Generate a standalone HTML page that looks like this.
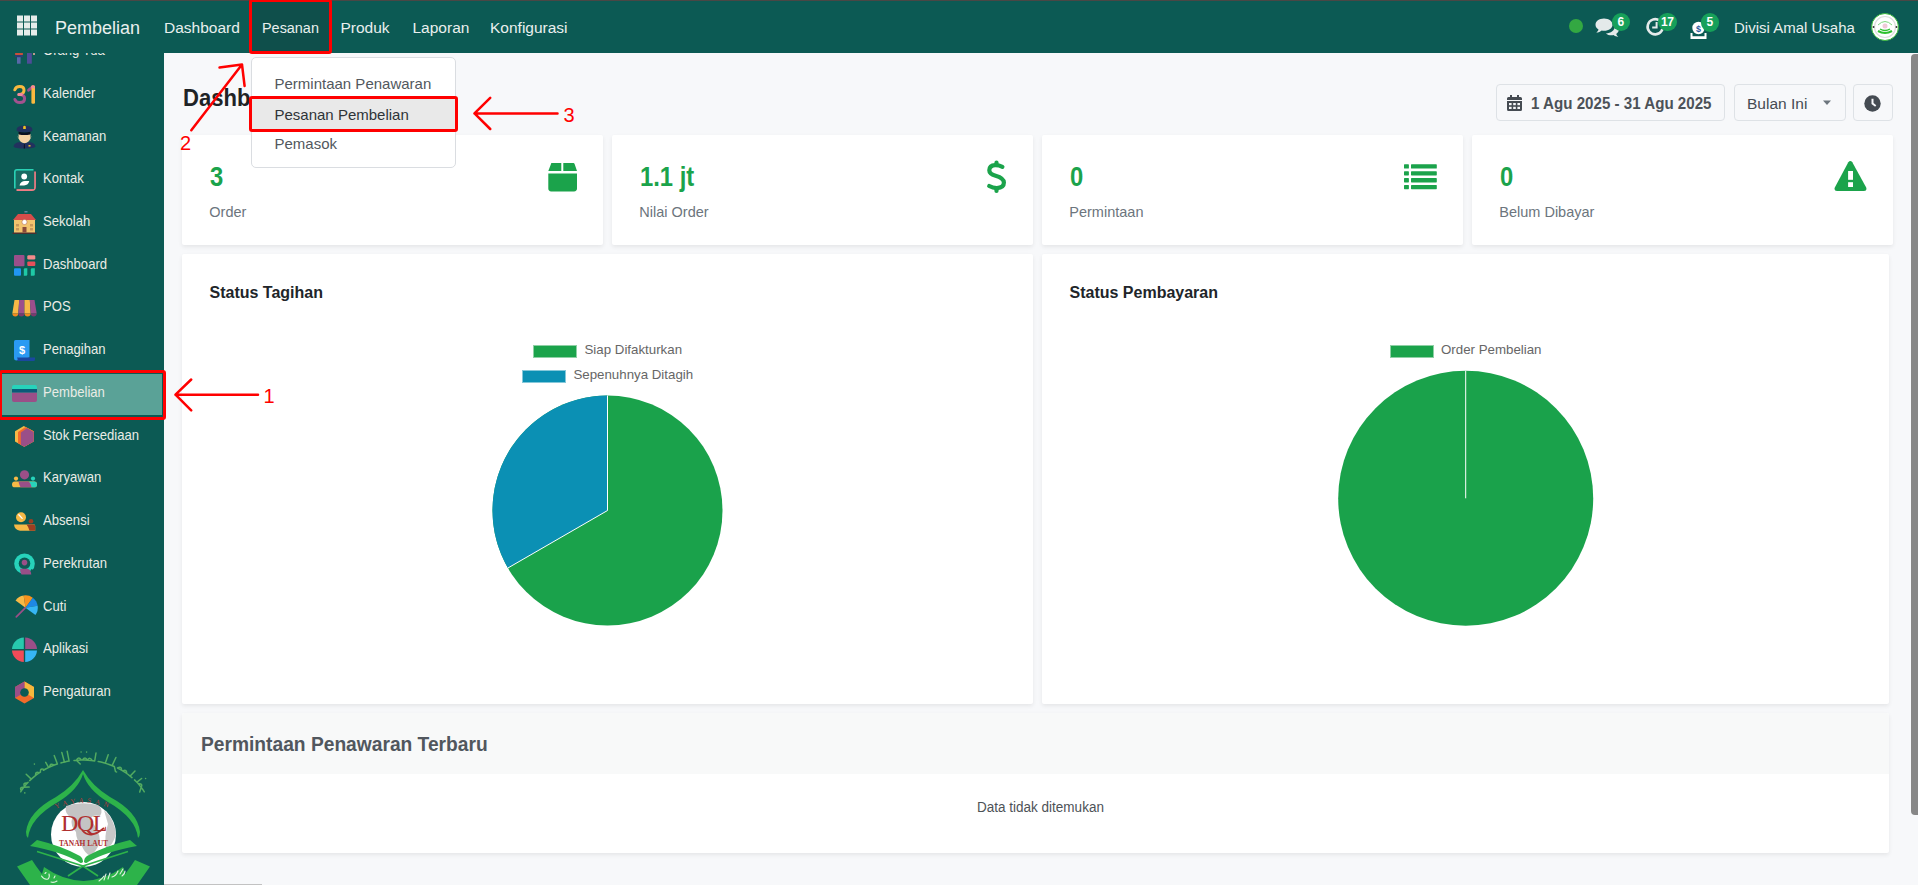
<!DOCTYPE html>
<html><head><meta charset="utf-8">
<style>
*{box-sizing:border-box;margin:0;padding:0}
html,body{width:1918px;height:885px;overflow:hidden;background:#f7f8fa;font-family:"Liberation Sans",sans-serif}
.abs{position:absolute}
#topline{left:0;top:0;width:1918px;height:1px;background:#4a4745}
#nav{left:0;top:1px;width:1918px;height:52px;background:#0c5a54}
#side{left:0;top:0;width:164px;height:885px;background:#0c5a54;overflow:hidden}
.nt{position:absolute;color:#e9efee;font-size:15.5px;white-space:nowrap;line-height:1}
.st{position:absolute;left:43.2px;color:#eaece6;font-size:14.8px;white-space:nowrap;line-height:1;transform:scaleX(.885);transform-origin:0 0}
.si{position:absolute;left:0;width:164px;height:43px}
.si .t{position:absolute;left:43px;color:#ebe9dc;font-size:13.5px;white-space:nowrap;line-height:1}
.si svg{position:absolute;left:11px}
.card{position:absolute;background:#fff;border-radius:2px;box-shadow:0 2px 4px rgba(0,0,0,.075)}
.num{position:absolute;left:27.5px;top:28px;font-size:28px;font-weight:bold;color:#1ba34b;line-height:1;transform:scaleX(.85);transform-origin:0 0;white-space:nowrap}
.lbl{position:absolute;left:27.3px;top:69.8px;font-size:14.5px;color:#6c757d;line-height:1;white-space:nowrap}
.btn{position:absolute;top:84px;height:37px;border:1px solid #dee2e6;border-radius:4px;background:#f7f8fa}
.red{position:absolute;color:#ff0000;font-size:20px;line-height:1}
</style></head><body>
<div class="abs" id="side"></div>


<!-- SIDEBAR -->
<div class="abs" style="left:2px;top:374px;width:160px;height:41px;background:#5aa297"></div>
<div class="st" style="top:43.0px">Orang Tua</div>
<div class="st" style="top:85.7px">Kalender</div>
<div class="st" style="top:128.5px">Keamanan</div>
<div class="st" style="top:171.2px">Kontak</div>
<div class="st" style="top:213.9px">Sekolah</div>
<div class="st" style="top:256.7px">Dashboard</div>
<div class="st" style="top:299.4px">POS</div>
<div class="st" style="top:342.2px">Penagihan</div>
<div class="st" style="top:384.9px">Pembelian</div>
<div class="st" style="top:427.6px">Stok Persediaan</div>
<div class="st" style="top:470.4px">Karyawan</div>
<div class="st" style="top:513.1px">Absensi</div>
<div class="st" style="top:555.9px">Perekrutan</div>
<div class="st" style="top:598.6px">Cuti</div>
<div class="st" style="top:641.3px">Aplikasi</div>
<div class="st" style="top:684.1px">Pengaturan</div>

<svg class="abs" style="left:0;top:0" width="164" height="885" viewBox="0 0 164 885">
<!-- orang tua -->
<rect x="15" y="52.5" width="8" height="2.7" rx="1.2" fill="#c9503a"/><rect x="15" y="55.2" width="8" height="2" fill="#2f3a78"/>
<rect x="17" y="57.2" width="3.6" height="6.5" fill="#5868a8"/><rect x="27" y="53" width="4.8" height="10.7" fill="#4e4c98"/>
<circle cx="34" cy="54" r="1" fill="#f4b3a0"/>
<!-- kalender 31 -->
<path d="M14.8 89.8 Q15.8 86.4 19.8 86.4 Q24 86.4 24 90.2 Q24 93.8 19.5 94.6" fill="none" stroke="#f9b93f" stroke-width="3" stroke-linecap="round"/>
<path d="M19.5 94.6 Q24.6 95 24.6 98.6 Q24.6 102.6 19.8 102.6 Q16.2 102.6 14.9 99.5" fill="none" stroke="#a3528f" stroke-width="3" stroke-linecap="round"/>
<path d="M18.7 94.6 L21.5 94.4" stroke="#f58a98" stroke-width="3" stroke-linecap="round"/>
<path d="M28.6 90.2 L33 86.6" stroke="#a3528f" stroke-width="3" stroke-linecap="round"/>
<rect x="31.4" y="85.4" width="3.6" height="18.3" rx="1.2" fill="#f9b93f"/>
<path d="M31.4 88.2 V86.6 Q31.4 85.4 33.2 85.4 Q35 85.4 35 86.8 V88.2Z" fill="#f58a98"/>
<path d="M31.8 87 L33 86.6" stroke="#f58a98" stroke-width="2.4"/>
<!-- keamanan police -->
<path d="M13.5 146.5 Q14 142.8 20 142 L24.3 143.5 L28.8 142 Q35 142.8 35.5 146.5 Q34 148.6 24.5 148.6 Q15 148.6 13.5 146.5Z" fill="#22315e"/>
<path d="M24 143.5 L24.6 143.5 L24.8 148.5 L23.8 148.5Z" fill="#0a0a14"/>
<rect x="28.5" y="145" width="2" height="1.6" fill="#e9b630"/>
<path d="M18.6 134 L30.5 134 L30.5 138.5 Q29 142.5 24.5 143.3 Q20 142.5 18.6 138.5Z" fill="#f6d2a4"/>
<path d="M17.6 135.5 Q18 139 18.6 138.5Z M31.4 135.5 Q31 139 30.5 138.5Z" fill="#f6d2a4"/>
<path d="M16.8 131 Q16 127.8 19 126.6 Q24.5 124.5 30 126.6 Q33 127.8 32.2 131 Q28 132.5 24.5 132.5 Q21 132.5 16.8 131Z" fill="#22315e"/>
<path d="M18.5 131.8 Q24.5 133.4 30.5 131.8 L30.2 134.5 Q24.5 135.5 18.8 134.5Z" fill="#0d1020"/>
<path d="M23.2 126.5 Q24.5 125.2 25.8 126.5 L25.8 129 L23.2 129Z" fill="#f2c21e"/>
<!-- kontak -->
<path d="M35 171.5 V187 Q35 190 32 190 H16.5" fill="none" stroke="#f07c84" stroke-width="1.8"/>
<path d="M14.9 188.5 V172 Q14.9 169.9 17 169.9 H33.5" fill="none" stroke="#2ad1b5" stroke-width="1.8"/>
<rect x="15.8" y="170.8" width="18.3" height="18.3" fill="#176a62"/>
<circle cx="24.2" cy="176.5" r="2.9" fill="#fff"/>
<path d="M19.5 185.5 Q20.5 181.2 25 181 L29.3 181 Q28.5 185.2 24 185.5Z" fill="#fff"/>
<!-- sekolah -->
<path d="M13 220 L18 214 L31 214 L36 220Z" fill="#d64d4a"/>
<rect x="14" y="220" width="21" height="13" fill="#f2c46e"/>
<rect x="12.5" y="232.5" width="24" height="1.5" fill="#4a3030"/>
<circle cx="24.5" cy="222" r="2.6" fill="#fff" stroke="#b86a4a" stroke-width=".6"/>
<rect x="22.5" y="227" width="4" height="5.5" fill="#8a4a3a"/>
<rect x="16" y="224" width="3" height="2.5" fill="#c9985a"/><rect x="30" y="224" width="3" height="2.5" fill="#c9985a"/>
<rect x="16" y="228" width="3" height="2.5" fill="#c9985a"/><rect x="30" y="228" width="3" height="2.5" fill="#c9985a"/>
<path d="M24.5 211 L24.5 214" stroke="#444" stroke-width=".8"/><rect x="24.5" y="211" width="3" height="1.5" fill="#5a8aa0"/>
<!-- dashboard -->
<rect x="14" y="255" width="10.5" height="11.2" rx="1" fill="#9b4f8b"/>
<rect x="27.3" y="255.2" width="8" height="4.3" rx="1.2" fill="#f28b8b"/>
<rect x="27.3" y="261.5" width="8" height="4.5" rx="1" fill="#e8505b"/>
<rect x="14" y="268.3" width="7" height="7.5" rx="1" fill="#2196f3"/>
<path d="M23.8 269.5 Q23.8 268.3 25 268.3 H27.3 V274.5 Q27.3 275.8 26 275.8 H23.8Z" fill="#1fc9a6"/>
<path d="M30.8 269.5 Q30.8 268.3 32 268.3 H34.8 V274.5 Q34.8 275.8 33.5 275.8 H30.8Z" fill="#1fc9a6"/>
<!-- POS -->
<path d="M14.5 300 L19.2 300 L18.3 313.5 L12.3 313.5Z" fill="#f7b946"/>
<path d="M19.2 300 L24.5 300 L24.5 313.5 L18.3 313.5Z" fill="#9c4f8c"/>
<path d="M24.5 300 L29.8 300 L30.7 313.5 L24.5 313.5Z" fill="#f7b946"/>
<path d="M29.8 300 L34.5 300 L36.7 313.5 L30.7 313.5Z" fill="#9c4f8c"/>
<path d="M12.3 313.5 H18.3 Q18 316.5 15.3 316.5 Q12.5 316.5 12.3 313.5Z" fill="#f28a1e"/>
<path d="M18.3 313.5 H24.5 Q24.3 316.5 21.4 316.5 Q18.5 316.5 18.3 313.5Z" fill="#7a3a6e"/>
<path d="M24.5 313.5 H30.7 Q30.5 316.5 27.6 316.5 Q24.7 316.5 24.5 313.5Z" fill="#f28a1e"/>
<path d="M30.7 313.5 H36.7 Q36.5 316.5 33.7 316.5 Q30.9 316.5 30.7 313.5Z" fill="#7a3a6e"/>
<!-- penagihan -->
<path d="M14 341.5 Q14 340 15.5 340 L29.5 340 L29.5 357.5 L16.5 360.5 Q14 360.5 14 358Z" fill="#2a9af3"/>
<path d="M17 357.5 H35 V359.5 Q35 361 33.5 361 H16.5 Q18.5 360 17 357.5Z" fill="#1a48a0"/>
<text x="22" y="354.3" font-family="Liberation Sans" font-weight="bold" font-size="11" fill="#fff" text-anchor="middle">$</text>
<!-- pembelian -->
<path d="M12 387 Q12 385 14 385 L35 385 Q37 385 37 387 L37 389 L12 389Z" fill="#27d3bb"/>
<rect x="12" y="389" width="25" height="3.7" fill="#0a5a78"/>
<path d="M12 392.7 L37 392.7 L37 400 Q37 402 35 402 L14 402 Q12 402 12 400Z" fill="#9a4f88"/>
<!-- stok -->
<path d="M23.8 426 L33.7 431.3 L33.7 441.5 L24.3 446.8 L15 441.5 L15 431.3Z" fill="#f7b946"/>
<path d="M25.5 427 L33.7 431.3 L33.7 441.5 L24.3 446.8 L18 443.2 L18 432Z" fill="#f26b2a"/>
<path d="M27 428.2 L33.7 432 L33.7 441.5 L24.3 446.8 L20.8 444.8 L20.8 432.6 Z" fill="#9a4f88"/>
<!-- karyawan -->
<circle cx="24.5" cy="474.8" r="4.6" fill="#9a4f88"/>
<circle cx="16" cy="478.6" r="2.1" fill="#f7b946"/><circle cx="33" cy="478.6" r="2.1" fill="#27d3bb"/>
<rect x="12" y="481.5" width="25" height="5.8" rx="2.9" fill="#f7b946"/>
<path d="M29 481.5 H34.1 A2.9 2.9 0 0 1 34.1 487.3 H31.5Z" fill="#27d3bb"/>
<path d="M18.5 481.5 H27.5 Q30.5 481.5 31.5 487.3 H20.5 Q18.8 484 18.5 481.5Z" fill="#9a4f88"/>
<!-- absensi -->
<circle cx="21" cy="517.3" r="5" fill="#f7b946"/><path d="M18.8 514.8 L22.2 518.4" stroke="#fff" stroke-width="1.3" stroke-linecap="round"/>
<circle cx="31" cy="521.3" r="2.3" fill="#9c3e22"/>
<path d="M14 524.6 H34 Q35.2 524.6 35.2 526 V530.8 H20 Q14.5 530 14 524.6Z" fill="#f7b946"/>
<path d="M26.5 524.6 H33.5 Q35.2 524.6 35.2 526.3 V530.8 H29.5 Q28.5 527 26.5 524.6Z" fill="#9c3e22"/>
<!-- perekrutan -->
<circle cx="24.5" cy="563.7" r="10.3" fill="#27d3bb"/>
<circle cx="24.5" cy="563.4" r="5.8" fill="#0c5a54"/>
<circle cx="24.5" cy="562.6" r="2.8" fill="#9a4f88"/>
<path d="M31.5 569 L35 571 L33 575 L29 573Z" fill="#0c5a54"/>
<path d="M20 568.8 H27.3 Q30.6 569 31.3 574.6 H21.5 Q20 572 20 568.8Z" fill="#9a4f88"/>
<!-- cuti -->
<path d="M25.5 607.7 L15.57 600.38 A12.34 12.34 0 0 1 23.66 595.50Z" fill="#f7b946"/>
<path d="M25.5 607.7 L23.66 595.50 A12.34 12.34 0 0 1 32.82 597.77Z" fill="#f7931e"/>
<path d="M25.5 607.7 L32.82 597.77 A12.34 12.34 0 0 1 37.70 605.86Z" fill="#1e88e5"/>
<path d="M25.5 607.7 L37.70 605.86 A12.34 12.34 0 0 1 35.43 615.02Z" fill="#36b6f5"/>
<line x1="25.3" y1="607.9" x2="16.3" y2="616.8" stroke="#9a4f88" stroke-width="1.7" stroke-linecap="round"/>
<!-- aplikasi -->
<path d="M23.8 637.5 A12.2 12.2 0 0 0 12 649 L23.8 649Z" fill="#27c9ad"/>
<path d="M25.2 637.5 A12.2 12.2 0 0 1 37 649 L25.2 649Z" fill="#9a4f88"/>
<path d="M12 650.5 A12.2 12.2 0 0 0 23.8 662 L23.8 650.5Z" fill="#f04b58"/>
<path d="M37 650.5 A12.2 12.2 0 0 1 25.2 662 L25.2 650.5Z" fill="#36b6f5"/>
<!-- pengaturan -->
<path d="M24.5 681.5 L34 687 L34 698 L24.5 703.5 L15 698 L15 687Z" fill="#f26b2a"/>
<path d="M24.5 681.5 L34 687 L34 698 L24.5 692.5Z" fill="#f5b83d"/>
<path d="M24.5 681.5 L15 687 L15 698 L24.5 692.5Z" fill="#9a4f88"/>
<circle cx="24.5" cy="692.5" r="4.3" fill="#0c5a54"/>
</svg>


<!-- LOGO -->
<svg class="abs" style="left:0;top:740px" width="164" height="145" viewBox="0 740 164 145">
<!-- arabic arc text (approximation) -->
<path d="M20.7 791.8 L21.8 790.2 L22.9 788.5 L24.1 786.9 L25.4 785.3 L26.7 783.8 L28.1 782.2M29.7 780.6 L31.3 779.1 L33.0 777.6 L34.8 776.1 L36.6 774.7 L38.4 773.4 L40.4 772.1M43.4 770.3 L45.6 769.0 L47.9 767.9 L50.2 766.8 L52.5 765.8 L55.0 764.8 L57.4 764.0M60.9 762.9 L62.2 762.6 L63.6 762.2 L65.0 761.9 L66.4 761.6 L67.7 761.3 L69.1 761.1M74.0 760.4 L77.4 760.2 L80.9 760.0 L84.3 760.0 L87.8 760.2 L91.2 760.5 L94.7 760.9M98.2 761.5 L101.0 762.1 L103.7 762.8 L106.4 763.6 L109.1 764.5 L111.7 765.5 L114.3 766.5M117.5 768.0 L120.1 769.4 L122.7 770.9 L125.1 772.4 L127.5 774.0 L129.8 775.8 L132.0 777.6M134.5 779.9 L136.4 781.7 L138.2 783.6 L139.8 785.6 L141.4 787.6 L142.9 789.7 L144.3 791.8M31.3 779.1L26.2 774.3M48.6 767.5L45.7 762.3M57.4 764.0L54.2 755.6M64.4 762.0L61.8 752.4M69.1 761.1L67.2 751.3M94.7 760.9L96.0 753.0M105.3 763.3L108.2 754.8M112.1 765.6L115.9 757.5M130.2 776.1L135.0 771.0M136.9 782.2L141.6 778.5M21.3 790.9Q19.1 787.0 23.8 787.3M24.5 786.4Q22.6 782.4 27.3 783.1M35.7 775.4Q34.9 771.0 39.4 772.7M40.4 772.1Q40.1 767.6 44.4 769.7M49.6 767.0Q50.1 762.5 54.0 765.2M76.4 760.2Q78.6 756.1 81.3 760.0M82.5 760.0Q85.1 756.0 87.4 760.1M87.4 760.1Q90.2 756.4 92.2 760.6M117.5 768.0Q121.7 765.7 121.6 770.3M122.7 770.9Q127.0 768.9 126.6 773.4M138.4 783.9Q143.1 783.3 141.2 787.3M23.8 787.3L29.1 787.1M76.4 760.2L80.2 764.0M114.3 766.5L115.5 771.5M141.2 787.3L139.7 792.0" fill="none" stroke="#52ab60" stroke-width="1.5" stroke-linecap="round" stroke-linejoin="round"/><circle cx="24.8" cy="792.9" r=".8" fill="#52ab60"/><circle cx="34.4" cy="764.1" r=".8" fill="#52ab60"/><circle cx="81.1" cy="752.0" r=".8" fill="#52ab60"/><circle cx="86.6" cy="752.1" r=".8" fill="#52ab60"/><circle cx="116.5" cy="772.0" r=".8" fill="#52ab60"/><circle cx="145.6" cy="778.5" r=".8" fill="#52ab60"/>
<!-- dome -->
<path fill="#2db34a" d="M83 770 Q74 786 56 797 Q28 812 26 832 Q26 836 28 838 Q30 818 58 802 Q78 790 83 774 Q88 790 108 802 Q136 818 138 838 Q140 836 140 832 Q138 812 110 797 Q92 786 83 770Z"/>
<!-- globe -->
<circle cx="83.5" cy="834.5" r="32.5" fill="#fff"/>
<path fill="#c4c4c4" d="M66 806 Q80 801 98 805 Q104 810 100 816 Q92 814 90 820 Q100 830 100 842 Q96 852 90 856 Q84 852 82 846 Q76 840 76 832 Q70 826 72 818 Q64 814 66 806Z"/>
<path fill="#c8c8c8" d="M104 810 Q114 818 116 834 Q113 846 106 848 Q104 836 108 824Z"/>
<!-- texts -->
<path id="yarc" d="M48 813 A67 67 0 0 1 119 813" fill="none"/><text font-family="Liberation Serif" font-size="7" fill="#b53a3a" letter-spacing="3.6"><textPath href="#yarc" startOffset="50%" text-anchor="middle">YAYASAN</textPath></text>
<text x="83.5" y="831" font-family="Liberation Serif" font-size="24" fill="#b0302f" text-anchor="middle" letter-spacing="-1.5">DQL</text>
<path d="M82 830 Q90 840 104 828" fill="none" stroke="#b0302f" stroke-width="1.8"/>
<text x="83.5" y="846" font-family="Liberation Serif" font-weight="bold" font-size="7.5" fill="#b0302f" text-anchor="middle">TANAH LAUT</text>
<!-- book -->
<path fill="#2db34a" d="M30 846 L37 840 Q62 846 80 856 Q83 858 83 862 Q81 864 79 862 Q62 852 30 846Z"/>
<path fill="#2db34a" d="M137 846 L130 840 Q105 846 87 856 Q84 858 84 862 Q86 864 88 862 Q105 852 137 846Z"/>
<path fill="none" stroke="#2db34a" stroke-width="1.8" d="M37 851.5 L83 866 L98 876 M128 851.5 L83 866 L68 876"/>
<!-- banner -->
<path fill="#2db34a" d="M17 866.5 L32 860 L36 866 L50 885 L30 885Z"/>
<path fill="#2db34a" d="M150 866.5 L135 860 L131 866 L117 885 L137 885Z"/>
<path fill="#2db34a" d="M44 867 Q62 880 83.5 881 Q105 880 123 867 L128 885 L39 885Z"/>
<g fill="none" stroke="#e0f2e0" stroke-width="1.1" stroke-linecap="round"><path d="M41.5 876 Q44 880 48 879 Q50 877 49 874 M45 873.5 L46 872.5 M51 882 Q54 883 57 881 M54 878 L55 876 M99 881 Q102 879 104 876 M104 880 L106 874 M108 879 L110 873 M112 877 Q116 876 118 871 M120 874 L123 869 M122 876 Q125 874 125 871"/></g>
</svg>

<div class="abs" id="nav"></div>
<div class="abs" id="topline"></div>
<!-- main content -->
<div class="abs" style="left:183px;top:86.4px;font-size:24px;font-weight:bold;color:#1f2326;line-height:1;transform:scaleX(.92);transform-origin:0 0">Dashboard</div>

<!-- date buttons -->
<div class="btn" style="left:1496px;width:229px"></div>
<div class="btn" style="left:1734px;width:112px"></div>
<div class="btn" style="left:1853px;width:40px"></div>

<!-- stat cards -->
<div class="card" style="left:182px;top:135px;width:421px;height:110px"><div class="num">3</div><div class="lbl">Order</div></div>
<div class="card" style="left:612px;top:135px;width:421px;height:110px"><div class="num">1.1 jt</div><div class="lbl">Nilai Order</div></div>
<div class="card" style="left:1042px;top:135px;width:421px;height:110px"><div class="num">0</div><div class="lbl">Permintaan</div></div>
<div class="card" style="left:1472px;top:135px;width:421px;height:110px"><div class="num">0</div><div class="lbl">Belum Dibayar</div></div>

<!-- chart cards -->
<div class="card" style="left:182px;top:254px;width:851px;height:450px"></div>
<div class="card" style="left:1042px;top:254px;width:847px;height:450px"></div>

<!-- bottom card -->
<div class="card" style="left:182px;top:713px;width:1707px;height:140px;overflow:hidden">
  <div class="abs" style="left:0;top:0;width:100%;height:61px;background:#f8f9f9"></div>
  <div class="abs" style="left:19px;top:21px;font-size:20px;font-weight:bold;color:#51575e;line-height:1;white-space:nowrap;transform:scaleX(.96);transform-origin:0 0">Permintaan Penawaran Terbaru</div>
  <div class="abs" style="left:795px;top:87px;font-size:14px;color:#4d5257;line-height:1;white-space:nowrap;transform:scaleX(.965);transform-origin:0 0">Data tidak ditemukan</div>
</div>


<!-- date btn content -->
<svg class="abs" style="left:1507px;top:95px" width="15" height="16" viewBox="0 0 15 16">
<path fill="#454b52" d="M3 0h2v2h5V0h2v2h1.5Q15 2 15 3.5V5H0V3.5Q0 2 1.5 2H3zM0 6h15v8.5Q15 16 13.5 16h-12Q0 16 0 14.5z"/>
<g fill="#f7f8fa"><rect x="2" y="8" width="2.6" height="2.2"/><rect x="6.2" y="8" width="2.6" height="2.2"/><rect x="10.4" y="8" width="2.6" height="2.2"/>
<rect x="2" y="11.8" width="2.6" height="2.2"/><rect x="6.2" y="11.8" width="2.6" height="2.2"/><rect x="10.4" y="11.8" width="2.6" height="2.2"/></g>
</svg>
<div class="abs" style="left:1530.5px;top:95.8px;font-size:15.6px;font-weight:bold;color:#4c5258;line-height:1;white-space:nowrap;transform:scaleX(.97);transform-origin:0 0">1 Agu 2025 - 31 Agu 2025</div>
<div class="abs" style="left:1747px;top:95.8px;font-size:15.5px;color:#454b52;line-height:1;white-space:nowrap">Bulan Ini</div>
<svg class="abs" style="left:1822px;top:100px" width="10" height="6" viewBox="0 0 10 6"><path d="M1 0.5h8L5 5z" fill="#6c757d"/></svg>
<svg class="abs" style="left:1864px;top:94.5px" width="17" height="17" viewBox="0 0 17 17"><circle cx="8.5" cy="8.5" r="8.2" fill="#454b52"/><path d="M7.5 3.8h2v4.3l2.8 2.2-1.2 1.5-3.6-2.8z" fill="#f7f8fa"/></svg>

<!-- card icons -->
<svg class="abs" style="left:548px;top:162.5px" width="30" height="29" viewBox="0 0 30 29">
<path fill="#1ba34b" d="M3.5 0h9.8v8H0.3L2.8 1.6Q3 0 3.5 0zM15.3 0h10.2Q26.2 0 26.7 1.2L29 8H15.3zM0.3 10.4H29V25.6Q29 28.4 26 28.4H3.2Q0.3 28.4 0.3 25.6z"/></svg>
<svg class="abs" style="left:985px;top:160px" width="23" height="34" viewBox="0 0 23 34">
<path fill="none" stroke="#1ba34b" stroke-width="4.2" stroke-linecap="round" d="M17.4 6.8Q13.8 5 10.2 5.1Q4.3 5.4 4.3 10.3Q4.3 14 10.6 15.8Q18.9 18.2 18.9 22.6Q18.9 27.8 12 28.1Q8 28.2 4.2 26"/>
<path stroke="#1ba34b" stroke-width="4.2" stroke-linecap="round" d="M11.5 2.5V5M11.5 28.5V31"/></svg>
<svg class="abs" style="left:1404px;top:163.5px" width="33" height="26" viewBox="0 0 33 26">
<g fill="#1ba34b"><rect x="0" y="0.3" width="4.9" height="4.3" rx=".6"/><rect x="7" y="0.3" width="25.8" height="4.3" rx=".6"/>
<rect x="0" y="7.3" width="4.9" height="4.1" rx=".6"/><rect x="7" y="7.3" width="25.8" height="4.1" rx=".6"/>
<rect x="0" y="14.1" width="4.9" height="4.3" rx=".6"/><rect x="7" y="14.1" width="25.8" height="4.3" rx=".6"/>
<rect x="0" y="20.9" width="4.9" height="4.3" rx=".6"/><rect x="7" y="20.9" width="25.8" height="4.3" rx=".6"/></g></svg>
<svg class="abs" style="left:1834px;top:161px" width="33" height="31" viewBox="0 0 33 31">
<path fill="#1ba34b" d="M14.3 1.2Q16.3 -1 18.3 1.2L32.2 26.5Q33.3 29.8 30 29.9H3Q-0.3 29.8 0.8 26.5z"/>
<rect x="14.1" y="10" width="4.9" height="8.8" fill="#fff"/><rect x="14.1" y="21.2" width="4.9" height="4.8" fill="#fff"/></svg>

<!-- chart titles -->
<div class="abs" style="left:209.5px;top:284.7px;font-size:16px;font-weight:bold;color:#212529;line-height:1;white-space:nowrap">Status Tagihan</div>
<div class="abs" style="left:1069.5px;top:284.7px;font-size:16px;font-weight:bold;color:#212529;line-height:1;white-space:nowrap">Status Pembayaran</div>

<!-- legends -->
<div class="abs" style="left:533px;top:345px;width:44px;height:12.5px;background:#1ba34b;border:1px solid #8fd0a5"></div>
<div class="abs" style="left:584.5px;top:343.4px;font-size:13.3px;color:#666;line-height:1;white-space:nowrap">Siap Difakturkan</div>
<div class="abs" style="left:521.5px;top:370px;width:44px;height:12.5px;background:#0b90b4;border:1px solid #85c8da"></div>
<div class="abs" style="left:573.4px;top:368.4px;font-size:13.3px;color:#666;line-height:1;white-space:nowrap">Sepenuhnya Ditagih</div>
<div class="abs" style="left:1389.5px;top:345px;width:44px;height:12.5px;background:#1ba34b;border:1px solid #8fd0a5"></div>
<div class="abs" style="left:1441px;top:343.4px;font-size:13.3px;color:#666;line-height:1;white-space:nowrap">Order Pembelian</div>

<!-- pies -->
<svg class="abs" style="left:0;top:0" width="1918" height="885" viewBox="0 0 1918 885">
<circle cx="607.5" cy="510.5" r="115" fill="#1aa24b"/>
<path d="M607.5 510.5 L607.5 395.5 A115 115 0 0 0 507.9 568 Z" fill="#0b90b4"/>
<path d="M607.5 395.5 L607.5 510.5 L507.9 568" fill="none" stroke="#fff" stroke-width="1"/>
<circle cx="1465.7" cy="498.3" r="127.5" fill="#1aa24b"/>
<line x1="1465.7" y1="370.8" x2="1465.7" y2="498.3" stroke="#fff" stroke-width="1"/>
</svg>

<!-- scrollbar -->
<div class="abs" style="left:1911px;top:54px;width:7px;height:761px;background:#878787;border-radius:4px 0 0 4px"></div>
<div class="abs" style="left:164px;top:884px;width:98px;height:1px;background:#c2c2c2"></div>

<!-- NAVBAR CONTENT -->
<svg class="abs" style="left:17px;top:15px" width="21" height="21" viewBox="0 0 21 21">
<g fill="#e6ecea"><rect x="0" y="0.5" width="6" height="6"/><rect x="7" y="0.5" width="6" height="6"/><rect x="14" y="0.5" width="6" height="6"/>
<rect x="0" y="7.5" width="6" height="6"/><rect x="7" y="7.5" width="6" height="6"/><rect x="14" y="7.5" width="6" height="6"/>
<rect x="0" y="14.5" width="6" height="6"/><rect x="7" y="14.5" width="6" height="6"/><rect x="14" y="14.5" width="6" height="6"/></g></svg>
<div class="nt" style="left:55px;top:18.5px;font-size:18px">Pembelian</div>
<div class="nt" style="left:164px;top:20px">Dashboard</div>
<div class="abs" style="left:249px;top:-1.5px;width:83px;height:55.5px;border:3.5px solid #ff0000;border-radius:3px;background:#0f4f4b"></div>
<div class="nt" style="left:262px;top:20.3px;font-size:15.5px;transform:scaleX(.93);transform-origin:0 0">Pesanan</div>
<div class="nt" style="left:340.5px;top:20px">Produk</div>
<div class="nt" style="left:412.5px;top:20px">Laporan</div>
<div class="nt" style="left:490px;top:20px">Konfigurasi</div>

<div class="abs" style="left:1569px;top:19px;width:14px;height:14px;border-radius:50%;background:#33a842"></div>
<svg class="abs" style="left:1594px;top:16px" width="26" height="22" viewBox="0 0 26 22">
<path fill="#e4eaea" d="M10 2.5c-5 0-8.5 2.8-8.5 6.2 0 2 1.2 3.6 3 4.7-.3 1.3-1.2 2.4-2.3 3.2 2.3 0 4.2-.9 5.5-2.1.8.2 1.5.3 2.3.3 5 0 8.5-2.8 8.5-6.1S15 2.5 10 2.5z"/>
<path fill="#e4eaea" d="M20.5 8.5c.3.6.4 1.1.4 1.7 0 4-4 7.1-9 7.2 1.4 1.2 3.4 1.9 5.6 1.9.7 0 1.4-.1 2-.2 1.2 1 2.9 1.7 4.8 1.8-1-.8-1.8-1.8-2.1-2.9 1.6-1 2.6-2.5 2.6-4.2 0-2.2-1.7-4.1-4.3-5.3z"/>
</svg>
<div class="abs" style="left:1611.5px;top:12.5px;width:18.5px;height:18.5px;border-radius:50%;background:#17a05a;color:#fff;font-size:12px;font-weight:bold;text-align:center;line-height:18.5px">6</div>
<svg class="abs" style="left:1644px;top:16px" width="22" height="22" viewBox="0 0 22 22">
<path fill="none" stroke="#e4eaea" stroke-width="2.6" d="M15.5 4.5A7.6 7.6 0 1 0 18.3 8"/>
<path fill="#e4eaea" d="M11.6 6h2v6.5H8.2v-2h3.4z"/>
</svg>
<div class="abs" style="left:1657.5px;top:12.5px;width:19.5px;height:18.5px;border-radius:9.5px;background:#17a05a;color:#fff;font-size:12px;font-weight:bold;text-align:center;line-height:18.5px;letter-spacing:-0.5px">17</div>
<svg class="abs" style="left:1689px;top:21px" width="20" height="19" viewBox="0 0 20 19">
<circle cx="9.5" cy="7" r="6.2" fill="#fff"/>
<text x="9.5" y="10.5" font-size="9" font-weight="bold" fill="#2a5aa0" text-anchor="middle" font-family="Liberation Sans">$</text>
<path fill="#fff" d="M1.5 12h2v3.3h12v-3.3h2V18h-16z"/>
</svg>
<div class="abs" style="left:1700.5px;top:13.3px;width:18.5px;height:18.5px;border-radius:50%;background:#17a05a;color:#fff;font-size:12px;font-weight:bold;text-align:center;line-height:18.5px">5</div>
<div class="nt" style="left:1734px;top:20.2px;font-size:15px">Divisi Amal Usaha</div>
<svg class="abs" style="left:1871px;top:12.5px" width="28" height="28" viewBox="0 0 28 28">
<circle cx="14" cy="14" r="13.5" fill="#fff" stroke="#36b83a" stroke-width="1"/>
<circle cx="14" cy="14" r="10.5" fill="none" stroke="#ddd" stroke-width="1.2"/>
<path d="M7 12 Q14 5 21 12" fill="none" stroke="#7ed67e" stroke-width="1"/>
<path d="M7 18 Q14 22 21 18" fill="none" stroke="#2fc12f" stroke-width="2.2"/>
<path d="M9 16 Q14 19 19 16" fill="none" stroke="#2fc12f" stroke-width="1.4"/>
<circle cx="14" cy="13" r="2.5" fill="#f0c8d8"/>
<circle cx="2.5" cy="14" r="1" fill="#333"/><circle cx="25.5" cy="14" r="1" fill="#333"/>
</svg>

<!-- DROPDOWN -->
<div class="abs" style="left:251px;top:57px;width:205px;height:111px;background:#fff;border:1px solid #dadde1;border-radius:5px"></div>
<div class="abs" style="left:252px;top:97px;width:203px;height:33px;background:#e9e9e9"></div>
<div class="nt" style="left:274.5px;top:76.2px;font-size:15px;color:#52585e">Permintaan Penawaran</div>
<div class="nt" style="left:274.5px;top:106.5px;font-size:15px;color:#2f3438">Pesanan Pembelian</div>
<div class="nt" style="left:274.5px;top:136.2px;font-size:15px;color:#52585e">Pemasok</div>
<div class="abs" style="left:249px;top:96px;width:209px;height:35.5px;border:3.5px solid #ff0000;border-radius:3px"></div>


<!-- ANNOTATIONS -->
<div class="abs" style="left:-1.5px;top:370px;width:167.5px;height:49.5px;border:3.5px solid #ff0000;border-radius:3px"></div>
<svg class="abs" style="left:0;top:0" width="1918" height="885" viewBox="0 0 1918 885">
<g stroke="#ff0000" stroke-width="2.5" fill="none" stroke-linecap="round" stroke-linejoin="round">
<path d="M258 394.7H175.5M191.2 379.5L175.5 394.7L191.2 410.3"/>
<path d="M557.5 113.4H474.5M490.2 97.8L474.5 113.4L490.2 129"/>
<path d="M191.3 130.3L242 64.5M219.5 67.5L242 64.5L244.6 86"/>
</g></svg>
<div class="red" style="left:263.5px;top:385.5px">1</div>
<div class="red" style="left:180px;top:133px">2</div>
<div class="red" style="left:563.5px;top:104.5px">3</div>
</body></html>
